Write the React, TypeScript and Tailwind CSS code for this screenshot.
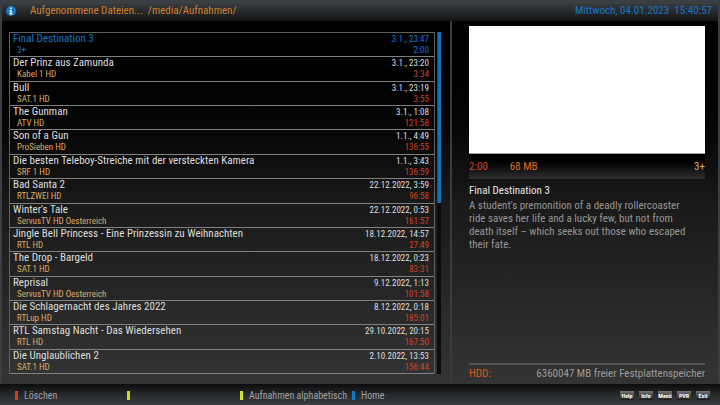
import React from "react";

type Recording = { title: string; channel: string; date: string; length: string };

const recordings: Recording[] = [
  { title: "Final Destination 3", channel: "3+", date: "3.1., 23:47", length: "2:00" },
  { title: "Der Prinz aus Zamunda", channel: "Kabel 1 HD", date: "3.1., 23:20", length: "3:34" },
  { title: "Bull", channel: "SAT.1 HD", date: "3.1., 23:19", length: "3:55" },
  { title: "The Gunman", channel: "ATV HD", date: "3.1., 1:08", length: "121:58" },
  { title: "Son of a Gun", channel: "ProSieben HD", date: "1.1., 4:49", length: "136:55" },
  { title: "Die besten Teleboy-Streiche mit der versteckten Kamera", channel: "SRF 1 HD", date: "1.1., 3:43", length: "136:59" },
  { title: "Bad Santa 2", channel: "RTLZWEI HD", date: "22.12.2022, 3:59", length: "96:58" },
  { title: "Winter's Tale", channel: "ServusTV HD Oesterreich", date: "22.12.2022, 0:53", length: "161:57" },
  { title: "Jingle Bell Princess - Eine Prinzessin zu Weihnachten", channel: "RTL HD", date: "18.12.2022, 14:57", length: "27:49" },
  { title: "The Drop - Bargeld", channel: "SAT.1 HD", date: "18.12.2022, 0:23", length: "83:31" },
  { title: "Reprisal", channel: "ServusTV HD Oesterreich", date: "9.12.2022, 1:13", length: "101:58" },
  { title: "Die Schlagernacht des Jahres 2022", channel: "RTLup HD", date: "8.12.2022, 0:18", length: "185:01" },
  { title: "RTL Samstag Nacht - Das Wiedersehen", channel: "RTL HD", date: "29.10.2022, 20:15", length: "167:50" },
  { title: "Die Unglaublichen 2", channel: "SAT.1 HD", date: "2.10.2022, 13:53", length: "156:44" },
];

const keys = ["Help", "Info", "Menü", "PVR", "Exit"];

function InfoIcon() {
  return (
    <svg viewBox="0 0 20 20" className="size-[10px] shrink-0" aria-hidden="true">
      <circle cx="10" cy="10" r="10" fill="#1478c4" />
      <circle cx="10" cy="4.6" r="2" fill="#e8f2fa" />
      <path d="M6.8 8h4.8v6.6h1.8V17H6.6v-2.4h1.8v-4.2H6.8z" fill="#e8f2fa" />
    </svg>
  );
}

function Row({ item, selected }: { item: Recording; selected: boolean }) {
  return (
    <li
      aria-current={selected}
      className={`flex flex-1 justify-between border-b border-[#808080] pr-[5px] pl-[3px] ${
        selected ? "bg-black text-[#1478c4]" : "text-[#dedede]"
      }`}
    >
      <div>
        <div className="text-[11px] leading-[12px]">{item.title}</div>
        <div className={`pl-1 text-[9px] leading-[10px] ${selected ? "" : "text-[#d8aa66]"}`}>{item.channel}</div>
      </div>
      <div className="text-right text-[9px]">
        <div className="leading-[12px]">{item.date}</div>
        <div className={`leading-[10px] ${selected ? "" : "text-[#d24026]"}`}>{item.length}</div>
      </div>
    </li>
  );
}

function ColorKey({ color, label, width }: { color: string; label: string; width: string }) {
  return (
    <button type="button" aria-label={label || "Gelb"} className={`flex shrink-0 items-center gap-[6px] whitespace-nowrap ${width}`}>
      <span className={`h-[9px] w-[3px] shrink-0 ${color}`} />
      {label}
    </button>
  );
}

export default function App() {
  return (
    <div className="flex h-screen min-h-[400px] flex-col overflow-hidden bg-[#3a3f43] font-['Roboto_Condensed','Liberation_Sans_Narrow',Roboto,sans-serif] text-[11px]">
      <div className="flex min-h-0 flex-1 flex-col px-[2px] pt-[4px]">
        <header className="flex h-[17px] shrink-0 items-center bg-linear-to-b from-[#363a3d] to-[#151515] pr-[6px] pb-[4px] pl-[4px] leading-[13px]">
          <InfoIcon />
          <h1 className="ml-[14px] flex-1 whitespace-pre text-[#cc802e]">{"Aufgenommene Dateien...  /media/Aufnahmen/"}</h1>
          <time className="whitespace-pre text-[#1478c4]">{"Mittwoch, 04.01.2023  15:40:57"}</time>
        </header>

        <main className="grid min-h-0 flex-1 grid-cols-[448fr_268fr] bg-linear-to-b from-black via-[#191919] to-[#343434]">
          <section className="flex gap-[2px] pt-[11px] pr-[9px] pb-[10px] pl-[7px]">
            <ul className="flex flex-1 flex-col border border-b-0 border-[#606060]">
              {recordings.map((item, i) => (
                <Row key={item.title} item={item} selected={i === 0} />
              ))}
            </ul>
            <div className="w-[4px] bg-[#0c0c0c]">
              <div className="h-1/2 border-l border-[#0d4f82] bg-[#1272b8]" />
            </div>
          </section>

          <aside className="flex flex-col border-l-2 border-[#383c40] pt-[5px] pr-[13px] pb-[3px] pl-[17px]">
            <div className="h-[128px] border-b border-[#a0a0a0] bg-white" />
            <div className="flex h-[25px] items-center gap-[22px] bg-linear-to-b from-black to-[#303030] pt-[2px]">
              <span className="text-[#d24026]">2:00</span>
              <span className="flex-1 text-[#dd6c20]">68 MB</span>
              <span className="text-[#d8aa66]">3+</span>
            </div>
            <h2 className="mt-[5px] leading-[14px] text-[#e6e6e6]">Final Destination 3</h2>
            <p className="mt-[1px] pr-[14px] leading-[13px] text-[#969696]">
              A student's premonition of a deadly rollercoaster ride saves her life and a lucky few, but not from death itself – which seeks out those who escaped their fate.
            </p>
            <div className="mt-auto flex justify-between border-t-2 border-[#555] pt-[1px] leading-[15px]">
              <span className="text-[#d9581c]">HDD:</span>
              <span className="text-[#9c9c9c]">6360047 MB freier Festplattenspeicher</span>
            </div>
          </aside>
        </main>
      </div>

      <footer className="flex h-[21px] shrink-0 items-center bg-linear-to-b from-[#0c0c0c] via-[#25292c] to-[#3a3f43] pt-[1px] pr-[10px] pl-[15px] text-[10px] text-[#a0a0a0]">
        <ColorKey color="bg-[#d2401c]" label="Löschen" width="w-[112px]" />
        <ColorKey color="bg-[#d2d62c]" label="" width="w-[113px]" />
        <ColorKey color="bg-[#d2e22c]" label="Aufnahmen alphabetisch" width="w-[112px]" />
        <ColorKey color="bg-[#1478c4]" label="Home" width="w-[60px]" />
        <div className="ml-auto flex gap-[5px]">
          {keys.map((k) => (
            <button key={k} type="button" className="h-[9px] w-[14px] bg-linear-to-b from-[#777] to-[#1c1c1c] text-center text-[6px] leading-[9px] font-bold text-white">
              {k}
            </button>
          ))}
        </div>
      </footer>
    </div>
  );
}
